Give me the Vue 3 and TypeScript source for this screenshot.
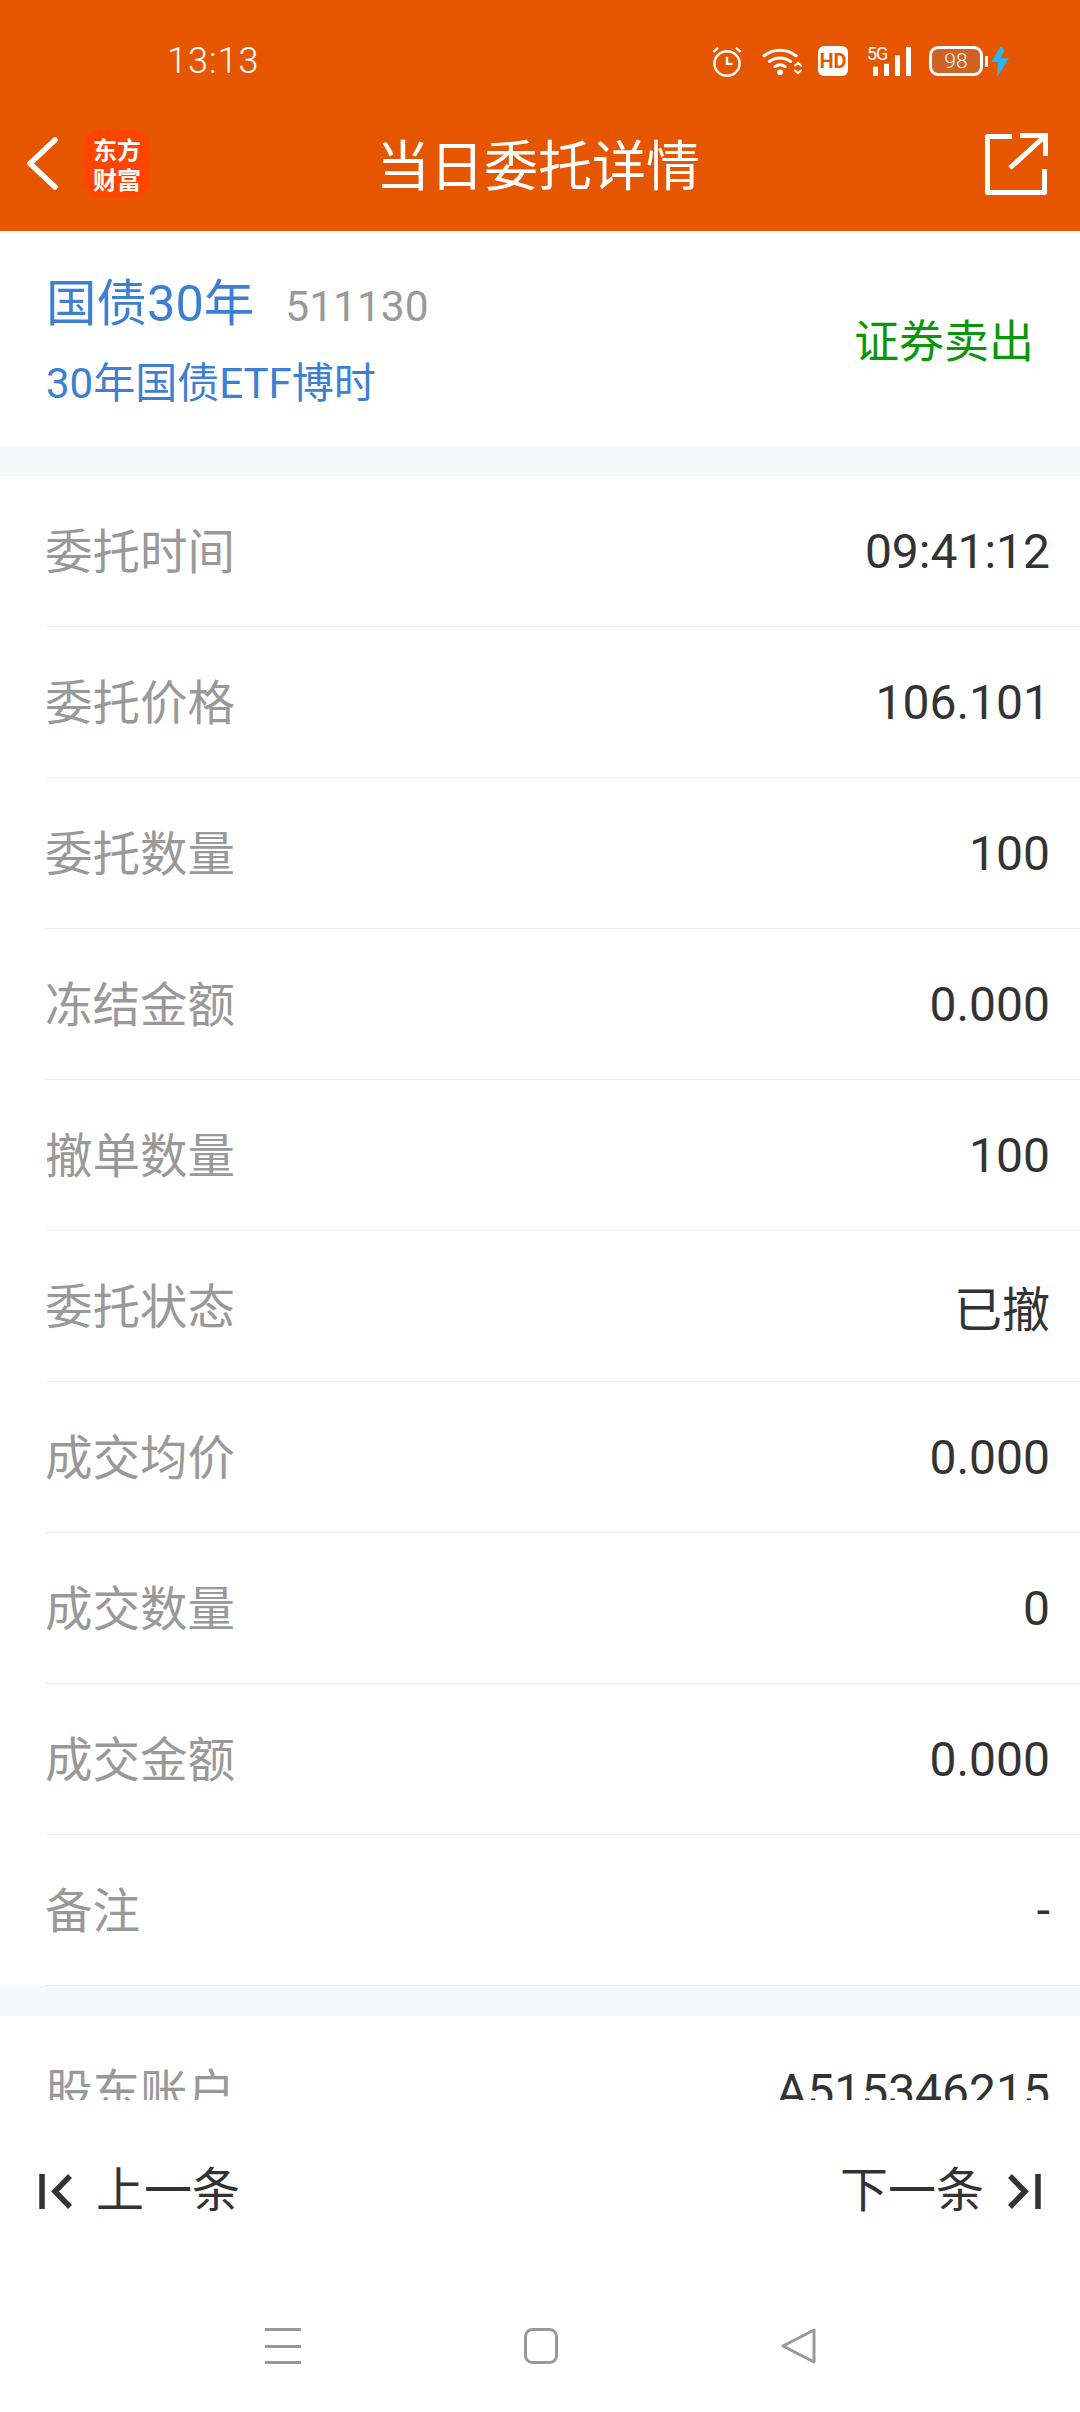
<script setup lang="ts">
interface Row {
  label: string;
  value: string;
}

const orderRows: Row[] = [
  { label: "委托时间", value: "09:41:12" },
  { label: "委托价格", value: "106.101" },
  { label: "委托数量", value: "100" },
  { label: "冻结金额", value: "0.000" },
  { label: "撤单数量", value: "100" },
  { label: "委托状态", value: "已撤" },
  { label: "成交均价", value: "0.000" },
  { label: "成交数量", value: "0" },
  { label: "成交金额", value: "0.000" },
  { label: "备注", value: "-" },
];

const accountRows: Row[] = [{ label: "股东账户", value: "A515346215" }];
</script>

<template>
  <div class="page">
    <header class="header">
      <div class="status">
        <span class="time">13:13</span>
        <div class="status-icons">
          <svg class="ic" width="30" height="31" viewBox="0 0 30 32" preserveAspectRatio="none" fill="none" stroke="#fff" stroke-width="2.4">
            <circle cx="15" cy="18" r="12.6" />
            <path d="M15 11v7.5h5.5M1.5 6 6 2M28.500 6 24 2" />
          </svg>
          <svg class="ic wifi" width="40" height="30" viewBox="0 0 40 32" preserveAspectRatio="none" fill="none" stroke="#fff" stroke-width="3.2" stroke-linecap="round">
            <path d="M2 10.5C11 2.5 25 2.5 34 10.5M7.5 16.5c6-5 15-5 21 0M13 22c3-2.4 7-2.4 10 0" />
            <circle cx="18" cy="28" r="3" fill="#fff" stroke="none" />
            <path stroke-width="2" d="M33 21l3-3 3 3M33 26l3 3 3-3" />
          </svg>
          <div class="hd">HD</div>
          <div class="signal">
            <span class="five-g">5G</span>
            <svg class="ic" width="44" height="30" viewBox="0 0 44 32" preserveAspectRatio="none">
              <rect x="6" y="22" width="5" height="10" fill="#fff" />
              <rect x="17" y="19" width="5" height="13" fill="#fff" />
              <rect x="28" y="10" width="5" height="22" fill="#fff" />
              <rect x="39" y="1" width="5" height="31" fill="#fff" />
            </svg>
          </div>
          <div class="battery">
            <div class="battery-body">98</div>
            <div class="battery-tip"></div>
          </div>
          <svg class="ic bolt" width="20" height="31" viewBox="0 0 20 33" preserveAspectRatio="none">
            <path d="M11 0 1 17h7l-1 16 12-20h-8l3-9z" fill="#29b6f6" />
          </svg>
        </div>
      </div>
      <div class="toolbar">
        <div class="toolbar-left">
          <svg width="33" height="53" viewBox="0 0 33 53" fill="none" stroke="#fff" stroke-width="5.5" stroke-linecap="round" stroke-linejoin="round">
            <path d="M29 3 4 26.500 29 50" />
          </svg>
          <div class="logo">
            <span class="logo-line">东方</span>
            <span class="logo-line">财富</span>
          </div>
        </div>
        <h1 class="title">当日委托详情</h1>
        <div class="toolbar-right">
          <svg width="64" height="62" viewBox="0 0 64 62" fill="none" stroke="#fff" stroke-width="5">
            <path d="M28 3.500H3.500V59.500H60.500V36" stroke-linejoin="round" />
            <path d="M26 35 60 4M36 2.500h25.500V23" />
          </svg>
        </div>
      </div>
    </header>

    <main class="scroll">
      <section class="stock">
        <div class="stock-info">
          <div class="stock-top">
            <span class="stock-name">国债30年</span>
            <span class="stock-code">511130</span>
          </div>
          <div class="stock-full">30年国债ETF博时</div>
        </div>
        <div class="stock-action">证券卖出</div>
      </section>

      <div class="gap"></div>
      <section>
        <div v-for="row in orderRows" :key="row.label" class="row">
          <span class="row-label">{{ row.label }}</span>
          <span class="row-value">{{ row.value }}</span>
        </div>
      </section>
      <div class="gap"></div>
      <section>
        <div v-for="row in accountRows" :key="row.label" class="row">
          <span class="row-label">{{ row.label }}</span>
          <span class="row-value">{{ row.value }}</span>
        </div>
      </section>
    </main>

    <div class="pager">
      <div class="pager-btn">
        <svg width="33" height="35" viewBox="0 0 33 35" fill="none" stroke="#333" stroke-width="5.5">
          <path d="M3 0v35M31 2 16 17.500 31 33" />
        </svg>
        <span>上一条</span>
      </div>
      <div class="pager-btn">
        <span>下一条</span>
        <svg width="33" height="35" viewBox="0 0 33 35" fill="none" stroke="#333" stroke-width="5.5">
          <path d="M30 0v35M2 2l15 15.500L2 33" />
        </svg>
      </div>
    </div>

    <nav class="nav">
      <svg width="36" height="36" viewBox="0 0 36 36" fill="#999">
        <rect width="36" height="3" y="0" />
        <rect width="36" height="3" y="17" />
        <rect width="36" height="3" y="33" />
      </svg>
      <svg width="34" height="36" viewBox="0 0 34 36" fill="none" stroke="#999" stroke-width="3">
        <rect x="1.500" y="1.500" width="31" height="33" rx="7" />
      </svg>
      <svg width="35" height="36" viewBox="0 0 35 36" fill="none" stroke="#999" stroke-width="3" stroke-linejoin="round">
        <path d="M33 2 2 18l31 16z" />
      </svg>
    </nav>
  </div>
</template>

<style>
html,
body {
  margin: 0;
  background: #fff;
}
</style>

<style scoped>
.page {
  width: 1080px;
  height: 2412px;
  display: flex;
  flex-direction: column;
  overflow: hidden;
  background: #fff;
  font-family: Roboto, "Noto Sans CJK SC", sans-serif;
  color: #333;
}

.header {
  height: 231px;
  flex: none;
  background: #e65600;
  color: #fff;
}

.status {
  height: 122px;
  display: flex;
  align-items: center;
  justify-content: space-between;
  padding: 0 70px 0 167px;
  box-sizing: border-box;
}

.time {
  font-size: 36px;
  font-weight: 300;
  letter-spacing: 1px;
}

.status-icons {
  display: flex;
  align-items: center;
}

.ic {
  display: block;
}

.wifi {
  margin-left: 20px;
}

.hd {
  width: 30px;
  height: 30px;
  margin-left: 16px;
  background: #fff;
  border-radius: 6px;
  color: #e65600;
  font: 700 20px/30px Roboto, sans-serif;
  text-align: center;
}

.signal {
  position: relative;
  margin-left: 19px;
}

.five-g {
  position: absolute;
  left: 0;
  top: -3px;
  font: 400 18px/22px Roboto, sans-serif;
  letter-spacing: -1px;
}

.battery {
  display: flex;
  align-items: center;
  margin-left: 18px;
}

.battery-body {
  width: 54px;
  height: 30px;
  box-sizing: border-box;
  border: 3px solid #fff;
  border-radius: 9px;
  background: #cf6224;
  font: 300 21px/24px Roboto, sans-serif;
  text-align: center;
}

.battery-tip {
  width: 3px;
  height: 11px;
  margin-left: 2px;
  background: #fff;
}

.bolt {
  margin-left: 2px;
}

.toolbar {
  height: 109px;
  display: grid;
  grid-template-columns: 1fr auto 1fr;
  align-items: center;
  padding: 0 32px 26px 26px;
  box-sizing: border-box;
}

.toolbar-left {
  display: flex;
  align-items: center;
  gap: 25px;
}

.logo {
  width: 66px;
  height: 67px;
  box-sizing: border-box;
  padding-top: 4px;
  border-radius: 15px;
  background: #ff4400;
  display: flex;
  flex-direction: column;
  align-items: center;
  font: 700 24px "Noto Sans CJK SC", sans-serif;
}

.logo-line {
  display: block;
  height: 30px;
  line-height: 30px;
}

.title {
  margin: 0 0 0 2px;
  padding-top: 9px;
  font-size: 54px;
  font-weight: 400;
  line-height: 70px;
}

.toolbar-right {
  display: flex;
  justify-content: flex-end;
}

.scroll {
  height: 1869px;
  flex: none;
  overflow: hidden;
}

.stock {
  height: 215px;
  box-sizing: border-box;
  padding: 0 46px;
  display: flex;
  align-items: center;
  justify-content: space-between;
}

.stock-info {
  padding-top: 3px;
}

.stock-top {
  display: flex;
  align-items: baseline;
  gap: 31px;
  line-height: 72px;
}

.stock-name {
  font-size: 50.5px;
  color: #3d7fd3;
}

.stock-code {
  font-size: 42.5px;
  color: #999;
}

.stock-full {
  margin-top: 13px;
  font-size: 42px;
  line-height: 56px;
  color: #3d7fd3;
}

.stock-action {
  font-size: 45px;
  color: #0a960a;
}

.gap {
  height: 30px;
  background: #f6f7f9;
}

.row {
  height: 151px;
  box-sizing: border-box;
  margin-left: 45px;
  padding-right: 30px;
  display: flex;
  align-items: center;
  justify-content: space-between;
  border-bottom: 1px solid #eee;
  font-size: 48px;
}

.row-label {
  padding-bottom: 5px;
  font-size: 47.5px;
  color: #999;
}

.pager {
  height: 182px;
  flex: none;
  display: flex;
  align-items: center;
  justify-content: space-between;
  padding: 0 39px;
  font-size: 48px;
  color: #333;
}

.pager-btn {
  display: flex;
  align-items: center;
  gap: 24px;
  line-height: 60px;
}

.nav {
  flex: 1;
  display: flex;
  align-items: center;
  justify-content: center;
  gap: 223px;
  padding-bottom: 2px;
}
</style>
